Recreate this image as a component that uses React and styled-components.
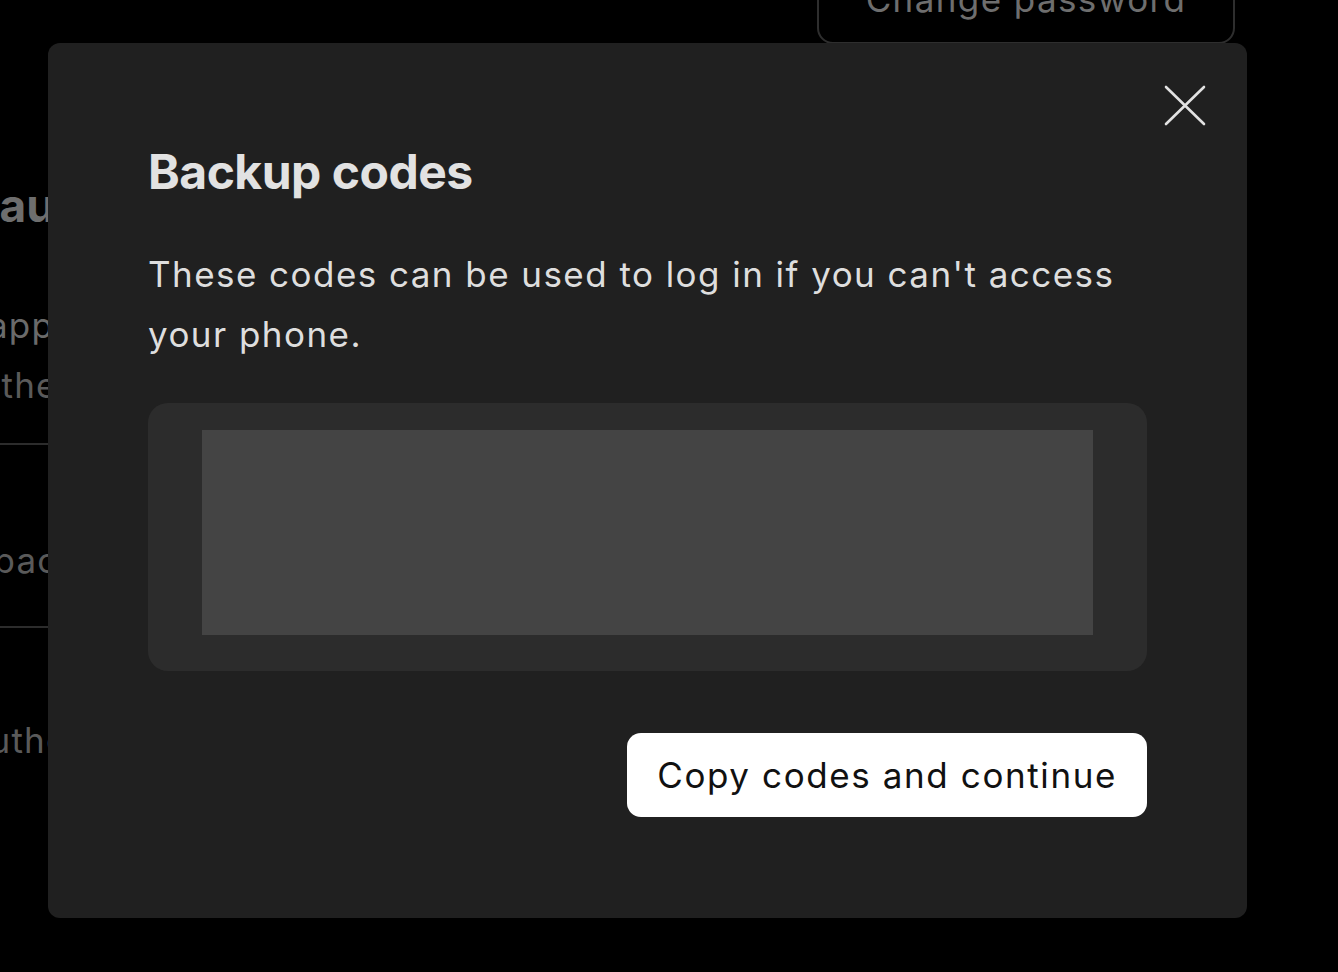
import styled, { createGlobalStyle } from "styled-components";

const GlobalStyle = createGlobalStyle`
  html, body {
    margin: 0;
    padding: 0;
    background: #000000;
  }
  body {
    font-family: Inter, "Noto Sans", "Liberation Sans", sans-serif;
    -webkit-font-smoothing: antialiased;
  }
`;

const Page = styled.div`
  width: 100vw;
  height: 100vh;
  overflow: hidden;
  background: #000000;
  position: relative;
`;

const TopBar = styled.div`
  display: flex;
  justify-content: flex-end;
  padding-right: 103px;
  margin-top: -40px;
`;

const GhostButton = styled.button`
  width: 418px;
  height: 84px;
  border: 2px solid #2e2e2e;
  border-radius: 16px;
  background: transparent;
  color: #6e6e6e;
  font-family: inherit;
  font-size: 35px;
  line-height: 40px;
  letter-spacing: 1.4px;
  padding: 0 0 23px;
  display: flex;
  align-items: flex-end;
  justify-content: center;
`;

const Settings = styled.section`
  margin-left: -262px;
  width: 900px;
  display: flex;
  flex-direction: column;
  margin-top: 133px;
`;

const SectionTitle = styled.h2`
  margin: 0;
  font-size: 46px;
  line-height: 56px;
  font-weight: 700;
  color: #6e6e6e;
`;

const Row = styled.div`
  display: flex;
  flex-direction: column;
  height: ${(p) => p.$height}px;
  padding-top: ${(p) => p.$top || 0}px;
  box-sizing: border-box;
  border-bottom: ${(p) => (p.$divider ? "2px solid #2c2c2c" : "none")};
`;

const RowLabel = styled.div`
  font-size: 35px;
  line-height: 60px;
  letter-spacing: 1.2px;
  color: ${(p) => (p.$muted ? "#5a5a5a" : "#6a6a6a")};
`;

const Overlay = styled.div`
  position: fixed;
  inset: 0;
  display: flex;
  align-items: flex-start;
  padding: 43px 0 0 48px;
`;

const Modal = styled.div`
  position: relative;
  width: 1199px;
  box-sizing: border-box;
  background: #202020;
  border-radius: 12px;
  padding: 100px 100px 101px;
  display: flex;
  flex-direction: column;
`;

const CloseButton = styled.button`
  position: absolute;
  top: 41px;
  right: 40px;
  width: 44px;
  height: 44px;
  padding: 0;
  border: none;
  background: transparent;
  display: flex;
  align-items: center;
  justify-content: center;
  cursor: pointer;
`;

const Title = styled.h1`
  margin: 0;
  font-size: 48px;
  line-height: 58px;
  font-weight: 700;
  color: #e2e2e2;
  letter-spacing: -0.5px;
`;

const Description = styled.p`
  margin: 43px 0 0;
  font-size: 35px;
  line-height: 60px;
  letter-spacing: 1.45px;
  color: #dedede;
`;

const CodesBox = styled.div`
  margin-top: 39px;
  background: #2c2c2c;
  border-radius: 20px;
  padding: 27px 54px 36px;
`;

const CodesPlaceholder = styled.div`
  height: 205px;
  background: #444444;
`;

const Actions = styled.div`
  margin-top: 62px;
  display: flex;
  justify-content: flex-end;
`;

const PrimaryButton = styled.button`
  height: 84px;
  padding: 0 30px;
  border: none;
  border-radius: 14px;
  background: #ffffff;
  color: #111111;
  font-family: inherit;
  font-size: 35px;
  line-height: 40px;
  letter-spacing: 1.6px;
  cursor: pointer;
`;

function CloseIcon() {
  return (
    <svg width="44" height="44" viewBox="0 0 44 44" fill="none">
      <path
        d="M3 3 L41 40 M41 3 L3 40"
        stroke="#e2e2e2"
        strokeWidth="2.6"
        strokeLinecap="round"
      />
    </svg>
  );
}

export default function App() {
  return (
    <>
      <GlobalStyle />
      <Page>
        <TopBar>
          <GhostButton>Change password</GhostButton>
        </TopBar>
        <Settings>
          <SectionTitle>Two-factor authentication</SectionTitle>
          <Row $height={212} $top={62} $divider>
            <RowLabel>Authenticator app</RowLabel>
            <RowLabel $muted>Use Google Authenticator</RowLabel>
          </Row>
          <Row $height={183} $top={85} $divider>
            <RowLabel $muted>Text message backup</RowLabel>
          </Row>
          <Row $height={200} $top={82}>
            <RowLabel $muted>Security key authorization</RowLabel>
          </Row>
        </Settings>
        <Overlay>
          <Modal>
            <CloseButton aria-label="Close">
              <CloseIcon />
            </CloseButton>
            <Title>Backup codes</Title>
            <Description>
              These codes can be used to log in if you can't access your phone.
            </Description>
            <CodesBox>
              <CodesPlaceholder />
            </CodesBox>
            <Actions>
              <PrimaryButton>Copy codes and continue</PrimaryButton>
            </Actions>
          </Modal>
        </Overlay>
      </Page>
    </>
  );
}
